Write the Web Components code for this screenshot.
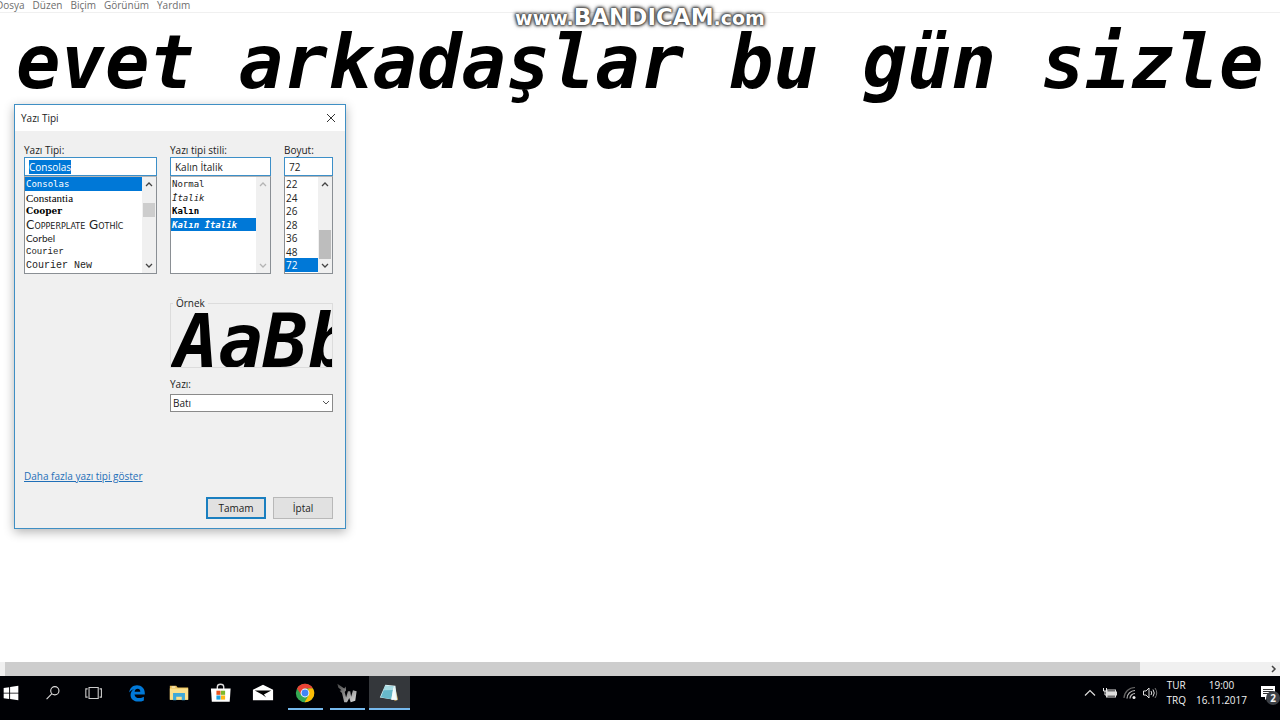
<!DOCTYPE html>
<html lang="tr">
<head>
<meta charset="utf-8">
<title>Not Defteri</title>
<style>
    body {
        margin: 0;
        background: #fff;
        font-family: "Open Sans", "Noto Sans", sans-serif;
        font-size: 10px;
        line-height: 14px;
        color: #222;
    }
</style>
</head>
<body>
<desktop-screen>
    <note-pad>
        <menu-item slot="menu">Dosya</menu-item>
        <menu-item slot="menu">Düzen</menu-item>
        <menu-item slot="menu">Biçim</menu-item>
        <menu-item slot="menu">Görünüm</menu-item>
        <menu-item slot="menu">Yardım</menu-item>
    </note-pad>
    <font-dialog slot="window"></font-dialog>
    <water-mark slot="overlay"><span slot="name">BANDICAM</span></water-mark>
    <task-bar slot="taskbar"></task-bar>
</desktop-screen>

<script>
function attach(el, html) {
    const template = document.createElement('template');
    template.innerHTML = html;
    el.attachShadow({ mode: 'open' });
    el.shadowRoot.appendChild(template.content.cloneNode(true));
}

class DesktopScreen extends HTMLElement {
    constructor() {
        super();
        attach(this, `
            <style>
                :host {
                    display: flex;
                    flex-direction: column;
                    position: relative;
                    height: 100vh;
                    overflow: hidden;
                }
            </style>
            <slot></slot>
            <slot name="taskbar"></slot>
            <slot name="window"></slot>
            <slot name="overlay"></slot>
        `);
    }
}

class MenuItem extends HTMLElement {
    constructor() {
        super();
        attach(this, `
            <style>
                :host { display: block; }
                button {
                    display: block;
                    border: 0;
                    padding: 0;
                    background: none;
                    font: inherit;
                    color: #6d6d6d;
                }
            </style>
            <button type="button"><slot></slot></button>
        `);
    }
}

class NotePad extends HTMLElement {
    constructor() {
        super();
        attach(this, `
            <style>
                :host {
                    display: flex;
                    flex-direction: column;
                    flex: 1;
                    min-height: 0;
                }
                nav {
                    display: flex;
                    align-items: flex-end;
                    gap: 8px;
                    height: 12px;
                    margin-left: -4px;
                    border-bottom: 1px solid #f0f0f0;
                    font-size: 10px;
                }
                textarea {
                    flex: 1;
                    min-height: 0;
                    margin: 0 15px 0 0;
                    padding: 5px 0 0 16px;
                    border: 0;
                    outline: 0;
                    resize: none;
                    overflow: hidden;
                    white-space: pre;
                    background: #fff;
                    color: #000;
                    font: italic bold 74px/88px "DejaVu Sans Mono", monospace;
                }
                .scroll {
                    display: flex;
                    align-items: center;
                    justify-content: space-between;
                    height: 14px;
                    padding-left: 5px;
                    background: #f0f0f0;
                }
                .thumb {
                    width: 89%;
                    height: 14px;
                    background: #cdcdcd;
                }
                svg { display: block; margin-right: 2px; }
            </style>
            <nav><slot name="menu"></slot></nav>
            <textarea aria-label="Metin" spellcheck="false">evet arkadaşlar bu gün sizle</textarea>
            <div class="scroll">
                <div class="thumb"></div>
                <svg width="8" height="10" viewBox="0 0 8 10"><path d="M2 2l3 3-3 3" fill="none" stroke="#444" stroke-width="1.5"/></svg>
            </div>
        `);
    }
}

class ScrollTrack extends HTMLElement {
    constructor() {
        super();
        attach(this, `
            <style>
                :host {
                    display: flex;
                    flex-direction: column;
                    width: 14px;
                    background: #f0f0f0;
                    color: #444;
                }
                :host([disabled]) { color: #b4b4b4; }
                :host([disabled]) .thumb { visibility: hidden; }
                svg { display: block; flex: none; }
                .before { flex: var(--before, 0); }
                .after { flex: var(--after, 0); }
                .thumb {
                    height: var(--thumb, 14px);
                    margin: 0 1px;
                    background: var(--thumb-color, #cdcdcd);
                }
            </style>
            <svg width="14" height="14" viewBox="0 0 14 14"><path d="M4 9l3-3 3 3" fill="none" stroke="currentColor" stroke-width="1.3"/></svg>
            <div class="before"></div>
            <div class="thumb"></div>
            <div class="after"></div>
            <svg width="14" height="14" viewBox="0 0 14 14"><path d="M4 5l3 3 3-3" fill="none" stroke="currentColor" stroke-width="1.3"/></svg>
        `);
    }
}

const LISTS = {
    fonts: [
        ['Consolas', 'mono'],
        ['Constantia', 'serif'],
        ['Cooper', 'cooper'],
        ['Copperplate Gothic', 'copper'],
        ['Corbel', 'corbel'],
        ['Courier', 'courier'],
        ['Courier New', 'courier-new']
    ],
    styles: [
        ['Normal', 'mono'],
        ['İtalik', 'mono italic'],
        ['Kalın', 'mono bold'],
        ['Kalın İtalik', 'mono bold italic']
    ],
    sizes: [['22'], ['24'], ['26'], ['28'], ['36'], ['48'], ['72']]
};

// label + edit box + list, as one of the three columns of the dialog
class PickList extends HTMLElement {
    constructor() {
        super();
        const value = this.getAttribute('value');
        const label = this.getAttribute('label');
        const options = LISTS[this.getAttribute('list')].map(([text, cls = '']) =>
            `<option class="${cls}"${text === value ? ' selected' : ''}>${text}</option>`
        ).join('');
        attach(this, `
            <style>
                :host { display: block; min-width: 0; }
                label { display: block; height: 14px; }
                input {
                    display: block;
                    box-sizing: border-box;
                    width: 100%;
                    height: 19px;
                    margin: 0;
                    padding: 0 4px;
                    border: 1px solid #3c8fc8;
                    outline: 0;
                    border-radius: 0;
                    background: #fff;
                    color: #222;
                    font: inherit;
                }
                input::selection { background: #0078d7; color: #fff; }
                .list {
                    display: flex;
                    height: 96px;
                    border: 1px solid #8a8f94;
                    border-top-color: #b5b5b5;
                    background: #fff;
                }
                select {
                    flex: 1;
                    min-width: 0;
                    height: 96px;
                    margin: 0;
                    padding: 0;
                    border: 0;
                    outline: 0;
                    border-radius: 0;
                    overflow: hidden;
                    background: #fff;
                    font: inherit;
                }
                option {
                    box-sizing: border-box;
                    height: 14px;
                    min-height: 0;
                    padding: 0 1px;
                    color: #222;
                }
                option:nth-child(even) { height: 13px; }
                option:checked {
                    background: #0078d7 linear-gradient(#0078d7, #0078d7);
                    color: #fff;
                    -webkit-text-fill-color: #fff;
                }
                .mono { padding-top: 2px; font-family: "DejaVu Sans Mono", monospace; font-size: 9px; }
                .bold { font-weight: bold; color: #000; }
                .italic { font-style: italic; }
                .serif { padding-top: 1px; font-family: "Liberation Serif", serif; font-size: 11px; color: #000; }
                .cooper { padding-top: 2px; font-family: "DejaVu Serif", serif; font-size: 9px; font-weight: 900; color: #000; }
                .copper { font-family: "DejaVu Sans", sans-serif; font-size: 12px; font-variant: small-caps; }
                .corbel { padding-top: 1px; font-family: Lato, sans-serif; font-size: 10px; }
                .courier { padding-top: 2px; font-family: "Liberation Mono", monospace; font-size: 9px; }
                .courier-new { padding-top: 2px; font-family: "Liberation Mono", monospace; font-size: 10px; }
            </style>
            <label for="edit">${label}</label>
            <input id="edit" type="text" value="${value}" spellcheck="false">
            <div class="list">
                <select size="7" aria-label="${label}">${options}</select>
                <slot></slot>
            </div>
        `);
    }
    connectedCallback() {
        if (this.hasAttribute('active')) {
            const edit = this.shadowRoot.querySelector('input');
            edit.focus();
            edit.select();
        }
    }
}

class PushButton extends HTMLElement {
    constructor() {
        super();
        attach(this, `
            <style>
                :host { display: block; }
                button {
                    display: block;
                    box-sizing: border-box;
                    width: 60px;
                    height: 22px;
                    padding: 0;
                    border: 1px solid #b8b8b8;
                    background: #e1e1e1;
                    font: inherit;
                    color: #222;
                }
                :host([default]) button { border: 2px solid #1a7fc0; }
            </style>
            <button type="button"><slot></slot></button>
        `);
    }
}

class FontDialog extends HTMLElement {
    constructor() {
        super();
        attach(this, `
            <style>
                :host {
                    position: absolute;
                    left: 14px;
                    top: 104px;
                    box-sizing: border-box;
                    width: 332px;
                    border: 1px solid #3f8fc4;
                    background: #f0f0f0;
                    box-shadow: 0 3px 10px rgba(0, 0, 0, 0.3);
                }
                header {
                    display: flex;
                    align-items: center;
                    justify-content: space-between;
                    height: 26px;
                    padding: 0 8px 0 6px;
                    background: #fff;
                }
                header button {
                    display: block;
                    padding: 0;
                    border: 0;
                    background: none;
                }
                svg { display: block; }
                main { padding: 12px 12px 9px 9px; }
                .lists {
                    display: grid;
                    grid-template-columns: 133fr 101fr 49fr;
                    gap: 13px;
                }
                .right {
                    margin: 22px 0 0 146px;
                }
                fieldset {
                    box-sizing: border-box;
                    min-width: 0;
                    height: 72px;
                    margin: 0 0 9px;
                    padding: 0;
                    border: 1px solid #dcdcdc;
                    overflow: hidden;
                }
                legend { margin-left: 2px; padding: 0 3px; }
                .sample {
                    height: 57px;
                    padding-left: 3px;
                    overflow: hidden;
                    color: #000;
                    font: italic bold 74px/62px "DejaVu Sans Mono", monospace;
                }
                label { display: block; height: 17px; }
                .combo { position: relative; }
                .combo select {
                    display: block;
                    appearance: none;
                    box-sizing: border-box;
                    width: 100%;
                    height: 18px;
                    padding: 0 2px;
                    border: 1px solid #8a8a8a;
                    border-radius: 0;
                    background: #fff;
                    font: inherit;
                    color: #222;
                }
                .combo svg {
                    position: absolute;
                    right: 2px;
                    top: 4px;
                    pointer-events: none;
                }
                a { display: inline-block; margin-top: 57px; color: #1f6fb8; }
                footer {
                    display: flex;
                    justify-content: flex-end;
                    gap: 7px;
                    margin-top: 14px;
                }
            </style>
            <header>
                <span>Yazı Tipi</span>
                <button type="button" aria-label="Kapat">
                    <svg width="12" height="12" viewBox="0 0 12 12"><path d="M2 2l8 8M10 2l-8 8" stroke="#333" fill="none"/></svg>
                </button>
            </header>
            <main>
                <div class="lists">
                    <pick-list label="Yazı Tipi:" list="fonts" value="Consolas" active>
                        <scroll-track style="--before: 12; --after: 41"></scroll-track>
                    </pick-list>
                    <pick-list label="Yazı tipi stili:" list="styles" value="Kalın İtalik">
                        <scroll-track style="--after: 1" disabled></scroll-track>
                    </pick-list>
                    <pick-list label="Boyut:" list="sizes" value="72">
                        <scroll-track style="--before: 1; --thumb: 29px; --thumb-color: #bdbdbd"></scroll-track>
                    </pick-list>
                </div>
                <div class="right">
                    <fieldset>
                        <legend>Örnek</legend>
                        <div class="sample">AaBb</div>
                    </fieldset>
                    <label for="script">Yazı:</label>
                    <div class="combo">
                        <select id="script"><option>Batı</option></select>
                        <svg width="10" height="10" viewBox="0 0 10 10"><path d="M2 3l3 3 3-3" fill="none" stroke="#555"/></svg>
                    </div>
                </div>
                <a href="#">Daha fazla yazı tipi göster</a>
                <footer>
                    <push-button default>Tamam</push-button>
                    <push-button>İptal</push-button>
                </footer>
            </main>
        `);
    }
}

class WaterMark extends HTMLElement {
    constructor() {
        super();
        attach(this, `
            <style>
                :host {
                    position: absolute;
                    top: 4px;
                    left: 0;
                    right: 0;
                    text-align: center;
                    pointer-events: none;
                    color: #fff;
                    font: bold 19px/26px "DejaVu Sans", sans-serif;
                    text-shadow: 0 0 1px #333, 0 0 2px #444, 0 0 3px #555, 0 0 3px #666, 0 0 4px #666, 0 0 5px #777;
                }
                ::slotted(span) { font-size: 23px; }
            </style>
            www.<slot name="name"></slot>.com
        `);
    }
}

const ICONS = {
    start: `<path fill="#fff" d="M4 6.5l6-.9v6H4zM11 5.4l9-1.200v7.400h-9zM4 12.500h6v6l-6-.9zM11 12.500h9v7.300l-9-1.200z"/>`,
    search: `<g fill="none" stroke="#ddd" stroke-width="1.2"><circle cx="14" cy="9.5" r="4.5"/><path d="M10.8 12.8L5 18.6"/></g>`,
    tasks: `<g fill="none" stroke="#ccc" stroke-width="1.2"><path d="M5.500 6h10v12h-10z"/><path d="M4 7.500H2v9h2M17 7.500h2v9h-2"/></g>`,
    edge: `<path fill="#0078d7" d="M3.500 11.500C4 6.500 7.500 3.500 12 3.500c5 0 8.500 3.500 8.500 8.300v1.700H9.300c.2 2.700 2.400 4 5.200 4 1.900 0 3.600-.5 5-1.400v4c-1.700.9-3.700 1.300-6 1.300-5 0-8.500-2.700-8.500-7.200 0-2.900 1.400-5.200 4-6.600-2 .6-4 1.900-5.500 3.900zM9.400 10.500h6.200c0-2-1-3.200-2.900-3.200-1.800 0-3 1.300-3.300 3.200z"/>`,
    folder: `<path fill="#e7bd55" d="M2 4h7l1.500 2H22v13H2z"/><path fill="#fbe08c" d="M2 7h20v12.500H2z"/><path fill="#3fa9d8" d="M5.500 12h13v8H15v-4H9v4H5.500z"/><path fill="#fff" d="M4 5h4v1H4z"/>`,
    store: `<path fill="none" stroke="#ddd" stroke-width="1.500" d="M8 8V5.500C8 1.500 15 1.500 15 5.500V8"/><path fill="#fff" d="M1 7h21.500l-1 14.500H2z"/><path fill="#e8541f" d="M7 9.500h4.500V14H7z"/><path fill="#7db928" d="M12 9.500h4.500V14H12z"/><path fill="#1ba1e2" d="M7 14.700h4.500v4.500H7z"/><path fill="#fdb813" d="M12 14.700h4.500v4.500H12z"/>`,
    mail: `<path fill="#fff" d="M1 8.500L12 3l11 5.500V20H1z"/><path fill="#000" d="M3 9.300h18l-8 4.200 2.500 3.500-4.500-3.500z"/>`,
    chrome: `<circle cx="12" cy="12" r="10" fill="#34a853"/><path fill="#ea4335" d="M3.300 7A10 10 0 0 1 20.700 7H12L8 14.300z"/><path fill="#fbbc05" d="M20.700 7A10 10 0 0 1 11.500 22L16 14.500 15.500 7z"/><circle cx="12" cy="12" r="4.800" fill="#fff"/><circle cx="12" cy="12" r="3.800" fill="#4285f4"/>`,
    wolf: `<defs><linearGradient id="w" x2="1" y2="1"><stop offset="0" stop-color="#444"/><stop offset="1" stop-color="#ddd"/></linearGradient></defs><path fill="url(#w)" d="M1.500 2l7.500 5 1.500-2 .5 4-1.500 2 1.500 6 2-7h2.500l1 6 2-7 4 1-1.500 10.500-5 1.500-1.500-4.500-2.500 4.500h-3L6.500 12 4 9.500l2-.5-3.500-3z"/>`,
    notes: `<path fill="#c9a45a" d="M18 4l4 15-4 2z"/><path fill="#dff3f5" d="M8 3l11 1 2 16-19-3z"/><path fill="#67b8c9" d="M8 4l9 .8-2.500 14L3 16.500z"/><path fill="#a8dbe3" d="M8 4l9 .8-.7 4L6 9z"/><path fill="#f5fbfb" d="M17 5l3 14-5.500.5z"/>`
};

class TaskIcon extends HTMLElement {
    constructor() {
        super();
        attach(this, `
            <style>
                :host { display: block; width: 42px; }
                button {
                    display: flex;
                    align-items: center;
                    justify-content: center;
                    box-sizing: border-box;
                    width: 100%;
                    height: 34px;
                    padding: 0;
                    border: 0;
                    background: none;
                }
                :host([running]) button {
                    width: 35px;
                    margin: 0 auto;
                    padding-top: 2px;
                    border-bottom: 2px solid #76b9ed;
                }
                :host([current]) button {
                    width: 41px;
                    background: #34373b;
                }
            </style>
            <button type="button" aria-label="${this.getAttribute('label')}">
                <svg width="22" height="22" viewBox="0 0 24 24">${ICONS[this.getAttribute('icon')]}</svg>
            </button>
        `);
    }
}

class TaskBar extends HTMLElement {
    constructor() {
        super();
        attach(this, `
            <style>
                :host {
                    display: flex;
                    justify-content: space-between;
                    box-sizing: border-box;
                    height: 44px;
                    padding-bottom: 10px;
                    background: #000105;
                    color: #f2f2f2;
                }
                .apps { display: flex; margin-left: -10px; }
                .tray {
                    display: flex;
                    align-items: center;
                    gap: 4px;
                    text-align: center;
                    line-height: 15px;
                }
                svg { display: block; }
                .lang { margin-left: 5px; }
                .clock { margin: 0 9px 0 6px; }
                .notice { position: relative; width: 20px; }
                .badge {
                    position: absolute;
                    left: 6px;
                    top: 6px;
                    width: 14px;
                    height: 14px;
                    border-radius: 50%;
                    background: #3c4046;
                    line-height: 14px;
                    font-weight: bold;
                }
            </style>
            <div class="apps">
                <task-icon icon="start" label="Başlat"></task-icon>
                <task-icon icon="search" label="Ara"></task-icon>
                <task-icon icon="tasks" label="Görev Görünümü"></task-icon>
                <task-icon icon="edge" label="Edge"></task-icon>
                <task-icon icon="folder" label="Dosya Gezgini"></task-icon>
                <task-icon icon="store" label="Mağaza"></task-icon>
                <task-icon icon="mail" label="Posta"></task-icon>
                <task-icon icon="chrome" label="Chrome" running></task-icon>
                <task-icon icon="wolf" label="Oyun" running></task-icon>
                <task-icon icon="notes" label="Not Defteri" running current></task-icon>
            </div>
            <div class="tray">
                <svg width="16" height="16" viewBox="0 0 16 16"><path d="M3 10.500l5-5 5 5" fill="none" stroke="#ddd" stroke-width="1.200"/></svg>
                <svg width="16" height="16" viewBox="0 0 16 16"><path fill="#ddd" d="M4 4.500h10v2h1v4h-1v2H4z"/><path fill="#000105" d="M5.500 5.500h7.500v.8H5.500zM5.500 10.800h7.500v.8H5.500z"/><path d="M1.500 3v3h3V3M3 6v4h1.500" fill="none" stroke="#eee"/></svg>
                <svg width="16" height="16" viewBox="0 0 16 16"><g fill="none" stroke-width="1.200"><path d="M2 13A11 11 0 0 1 13 2.500" stroke="#666"/><path d="M5 13.500A8 8 0 0 1 13 5.500M8 13.500a5 5 0 0 1 5-5" stroke="#bbb"/></g><circle cx="12" cy="12.500" r="1.500" fill="#eee"/></svg>
                <svg width="16" height="16" viewBox="0 0 16 16"><g fill="none" stroke="#ddd"><path d="M1.500 6h2.500l3-3v10l-3-3H1.500z"/><path d="M9 6q1.500 2 0 4M11 4.500q2.500 3.500 0 7"/><path d="M13 3q3.500 5 0 10" stroke="#777"/></g></svg>
                <div class="lang">TUR<br>TRQ</div>
                <div class="clock">19:00<br>16.11.2017</div>
                <div class="notice">
                    <svg width="18" height="16" viewBox="0 0 18 16"><path fill="#fff" d="M1 1h14v11H8l-3 3v-3H1z"/><path stroke="#333" d="M3 4.500h10M3 6.500h10M3 8.500h7"/></svg>
                    <span class="badge">2</span>
                </div>
            </div>
        `);
    }
}

customElements.define('menu-item', MenuItem);
customElements.define('note-pad', NotePad);
customElements.define('scroll-track', ScrollTrack);
customElements.define('pick-list', PickList);
customElements.define('push-button', PushButton);
customElements.define('font-dialog', FontDialog);
customElements.define('water-mark', WaterMark);
customElements.define('task-icon', TaskIcon);
customElements.define('task-bar', TaskBar);
customElements.define('desktop-screen', DesktopScreen);
</script>
</body>
</html>
